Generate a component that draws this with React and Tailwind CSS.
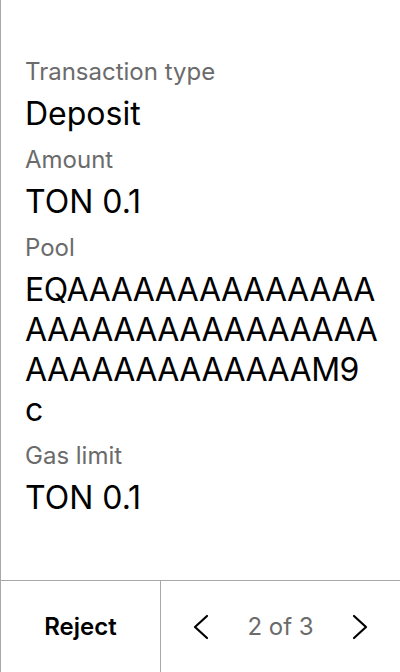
import React from 'react';

// address wrapped the way the wallet shows it
const POOL_LINES = ['EQ' + 'A'.repeat(14), 'A'.repeat(16), 'A'.repeat(13) + 'M9', 'c'];

const Label = ({ children }) => (
  <p className="text-[24px] leading-[32px] text-[#6b6b6b] mb-[6px]">{children}</p>
);

const Value = ({ children }) => (
  <p className="text-[32px] leading-[40px] text-black mb-[10px]">{children}</p>
);

const App = () => {
  return (
    <div className="w-[400px] h-[672px] bg-white border-l border-[#a8a8a8] flex flex-col font-['Inter',sans-serif]">
      <main className="flex-1 px-6 pt-[56px]">
        <Label>Transaction type</Label>
        <Value>Deposit</Value>
        <Label>Amount</Label>
        <Value>TON 0.1</Value>
        <Label>Pool</Label>
        <Value>
          {POOL_LINES.map((line) => (
            <span key={line} className="block whitespace-nowrap tracking-[-0.5px]">{line}</span>
          ))}
        </Value>
        <Label>Gas limit</Label>
        <Value>TON 0.1</Value>
      </main>
      <footer className="h-[92px] border-t border-[#a8a8a8] flex">
        <button className="w-[160px] border-r border-[#a8a8a8] text-[24px] font-semibold text-black">Reject</button>
        <div className="flex-1 flex items-center justify-between px-6">
          <button className="w-8 h-8 flex items-center justify-center text-black">
            <svg width="16" height="26" viewBox="0 0 16 26" fill="none" stroke="currentColor" strokeWidth="2.2" strokeLinecap="round" strokeLinejoin="round">
              <path d="M14 2L2 13l12 11" />
            </svg>
          </button>
          <span className="text-[24px] text-[#6b6b6b]">2 of 3</span>
          <button className="w-8 h-8 flex items-center justify-center text-black">
            <svg width="16" height="26" viewBox="0 0 16 26" fill="none" stroke="currentColor" strokeWidth="2.2" strokeLinecap="round" strokeLinejoin="round">
              <path d="M2 2l12 11L2 24" />
            </svg>
          </button>
        </div>
      </footer>
    </div>
  );
};

export default App;
